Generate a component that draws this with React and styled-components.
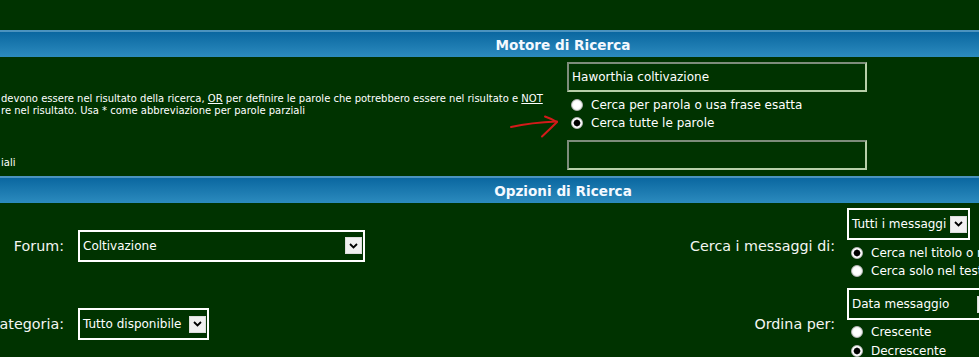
import React from 'react';
import styled, { createGlobalStyle } from 'styled-components';

const Global = createGlobalStyle`
  html, body { margin: 0; padding: 0; background: #003300; overflow: hidden; }
  body { font-family: "DejaVu Sans", Verdana, sans-serif; color: #ffffff; }
`;

const Page = styled.div`
  position: relative;
  width: 1126px;
  padding-top: 30px;
`;

const SectionHeader = styled.div`
  height: 27px;
  box-sizing: border-box;
  border-top: 2px solid #4b93bf;
  background: linear-gradient(#0a67a0, #2c8bbe);
  display: flex;
  align-items: center;
  justify-content: center;
  font-weight: bold;
  font-size: 13.6px;
  color: #f4f9ff;
`;

const KeywordRow = styled.div`
  display: grid;
  grid-template-columns: 567px 1fr;
`;

const Hint = styled.div`
  font-size: 10px;
  line-height: 12px;
  white-space: nowrap;
  padding: ${p => p.$top}px 0 0 1px;
  color: #ffffff;
`;

const Under = styled.span`
  text-decoration: underline;
`;

const FieldCell = styled.div`
  display: flex;
  flex-direction: column;
  align-items: flex-start;
  padding: ${p => p.$pad};
`;

const TextField = styled.input`
  width: 300px;
  height: 30px;
  box-sizing: border-box;
  border: 2px solid;
  border-color: #7d8c7b #b7cfa9 #b7cfa9 #7d8c7b;
  background: transparent;
  color: #ffffff;
  font: 12px "DejaVu Sans", Verdana, sans-serif;
  padding: 0 3px;
  margin: 0;
  outline: none;
`;

const RadioList = styled.div`
  display: flex;
  flex-direction: column;
  margin-top: ${p => p.$top}px;
`;

const RadioRow = styled.div`
  display: flex;
  align-items: center;
  height: ${p => p.$h}px;
  font-size: 12px;
  white-space: nowrap;
  color: #ffffff;
`;

const RadioDot = styled.span`
  flex: none;
  width: 12px;
  height: 12px;
  border-radius: 50%;
  margin: 0 8px 0 4px;
  box-sizing: border-box;
  border: 1px solid #b9b9b9;
  background: ${p =>
    p.$checked
      ? 'radial-gradient(circle, #000 0 2.6px, #555 3.2px, #fff 3.8px)'
      : 'radial-gradient(circle, #fff 0 3px, #f2f2f2 5px)'};
`;

const OptionsRow = styled.div`
  display: grid;
  grid-template-columns: 72px 569px 200px 1fr;
  align-items: center;
`;

const Label = styled.div`
  display: flex;
  justify-content: flex-end;
  padding-right: ${p => p.$pr}px;
  font-size: 14.3px;
  white-space: nowrap;
  color: #f4f6f2;
`;

const ControlCell = styled.div`
  display: flex;
  flex-direction: column;
  align-items: flex-start;
  padding: ${p => p.$pad};
`;

const SelectBox = styled.div`
  display: flex;
  align-items: center;
  box-sizing: border-box;
  width: ${p => p.$w}px;
  height: 32px;
  border: 2px solid #ffffff;
  padding: 0 1px 0 3px;
  font-size: 12px;
  white-space: nowrap;
  overflow: hidden;
  color: #ffffff;
`;

const SelectText = styled.span`
  flex: 1;
`;

const SelectArrow = styled.span`
  flex: none;
  width: 17px;
  height: 17px;
  margin-left: 2px;
  box-sizing: border-box;
  border: 1px solid #dcdcdc;
  background: #f0f0f0;
  display: flex;
  align-items: center;
  justify-content: center;
`;

const Scribble = styled.svg`
  position: absolute;
  left: 505px;
  top: 112px;
  overflow: visible;
`;

const Select = ({ w, children }) => (
  <SelectBox $w={w}>
    <SelectText>{children}</SelectText>
    <SelectArrow>
      <svg width="9" height="6" viewBox="0 0 9 6">
        <path d="M1 1 L4.5 4.5 L8 1" fill="none" stroke="#000" strokeWidth="1.8" />
      </svg>
    </SelectArrow>
  </SelectBox>
);

const Radio = ({ checked, h, children }) => (
  <RadioRow $h={h}>
    <RadioDot $checked={checked} />
    {children}
  </RadioRow>
);

export default function App() {
  return (
    <Page>
      <Global />
      <SectionHeader>Motore di Ricerca</SectionHeader>
      <KeywordRow>
        <Hint $top={36}>
          <div>
            devono essere nel risultato della ricerca, <Under>OR</Under> per definire le parole che potrebbero essere nel risultato e <Under>NOT</Under>
          </div>
          <div>re nel risultato. Usa * come abbreviazione per parole parziali</div>
        </Hint>
        <FieldCell $pad="5px 0 0 0">
          <TextField defaultValue="Haworthia coltivazione" readOnly />
          <RadioList $top={4}>
            <Radio h={18}>Cerca per parola o usa frase esatta</Radio>
            <Radio h={18} checked>Cerca tutte le parole</Radio>
          </RadioList>
        </FieldCell>
      </KeywordRow>
      <KeywordRow>
        <Hint $top={25}>
          <div>iali</div>
        </Hint>
        <FieldCell $pad="8px 0 6px 0">
          <TextField defaultValue="" readOnly />
        </FieldCell>
      </KeywordRow>

      <SectionHeader>Opzioni di Ricerca</SectionHeader>
      <OptionsRow>
        <Label $pr={8}>Forum:</Label>
        <ControlCell $pad="0 0 0 6px">
          <Select w={287}>Coltivazione</Select>
        </ControlCell>
        <Label $pr={6}>Cerca i messaggi di:</Label>
        <ControlCell $pad="5px 0 8px 6px">
          <Select w={123}>Tutti i messaggi</Select>
          <RadioList $top={4}>
            <Radio h={18} checked>Cerca nel titolo o nel testo</Radio>
            <Radio h={18}>Cerca solo nel testo</Radio>
          </RadioList>
        </ControlCell>
      </OptionsRow>
      <OptionsRow>
        <Label $pr={8}>Categoria:</Label>
        <ControlCell $pad="0 0 0 6px">
          <Select w={131}>Tutto disponibile</Select>
        </ControlCell>
        <Label $pr={6}>Ordina per:</Label>
        <ControlCell $pad="0 0 0 6px">
          <Select w={150}>Data messaggio</Select>
          <RadioList $top={2}>
            <Radio h={19}>Crescente</Radio>
            <Radio h={19} checked>Decrescente</Radio>
          </RadioList>
        </ControlCell>
      </OptionsRow>

      <Scribble width="58" height="30" viewBox="0 0 58 30">
        <path d="M6 15 Q26 10.5 52 9.5" fill="none" stroke="#d41a1a" strokeWidth="2" strokeLinecap="round" />
        <path d="M40 4.5 Q47 7 52 10 Q45 17 37 24.5" fill="none" stroke="#d41a1a" strokeWidth="2" strokeLinecap="round" strokeLinejoin="round" />
      </Scribble>
    </Page>
  );
}
